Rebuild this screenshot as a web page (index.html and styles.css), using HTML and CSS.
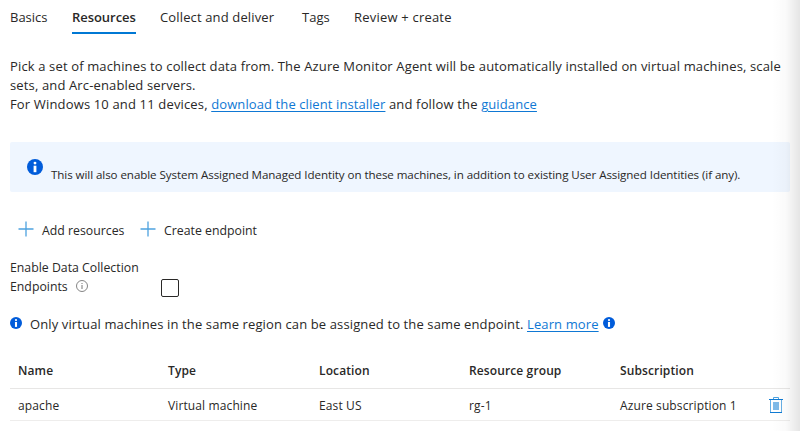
FILE: index.html
```
<!DOCTYPE html>
<html lang="en">
<head>
<meta charset="utf-8">
<title>Create Data Collection Rule</title>
<link rel="stylesheet" href="styles.css">
</head>
<body>
<svg class="defs" width="0" height="0" aria-hidden="true">
  <symbol id="info" viewBox="0 0 16 16"><circle cx="8" cy="8" r="8" fill="#015cda"/><circle cx="8" cy="4.1" r="1.45" fill="#fff"/><path d="M6.6 6.7h2.8v6.5H6.6z" fill="#fff"/></symbol>
  <symbol id="plus" viewBox="0 0 16 16"><path d="M8 .5v15M.5 8h15" stroke="#4da2df" stroke-width="1.3"/></symbol>
</svg>
<main class="page">
  <nav class="tabs">
    <a class="tab t-basics">Basics</a>
    <a class="tab active">Resources</a>
    <a class="tab t-collect">Collect and deliver</a>
    <a class="tab t-tags">Tags</a>
    <a class="tab t-review">Review + create</a>
  </nav>
  <p class="intro">Pick a set of machines to collect data from. The Azure Monitor Agent will be automatically installed on virtual machines, scale<br>sets, and Arc-enabled servers.<br><span class="line3">For Windows 10 and 11 devices, <a class="link">download the client installer</a> and follow the <a class="link">guidance</a></span></p>
  <div class="banner">
    <svg class="banner-icon"><use href="#info"/></svg>
    <span class="banner-text">This will also enable System Assigned Managed Identity on these machines, in addition to existing User Assigned Identities (if any).</span>
  </div>
  <div class="commands">
    <div class="command"><svg class="plus"><use href="#plus"/></svg><span>Add resources</span></div>
    <div class="command"><svg class="plus"><use href="#plus"/></svg><span>Create endpoint</span></div>
  </div>
  <div class="field">
    <div class="field-label">Enable Data Collection<br>Endpoints<svg class="hint" viewBox="0 0 12 12"><circle cx="6" cy="6" r="5.5" fill="none" stroke="#777" stroke-width=".9"/><path d="M6 5v4M6 3v1" stroke="#777"/></svg></div>
    <div class="checkbox"></div>
  </div>
  <div class="note"><svg class="small-info"><use href="#info"/></svg><span class="note-text">Only virtual machines in the same region can be assigned to the same endpoint. <a class="link">Learn more</a></span><svg class="small-info"><use href="#info"/></svg></div>
  <div class="table">
    <div class="row head"><span>Name</span><span>Type</span><span>Location</span><span>Resource group</span><span>Subscription</span></div>
    <div class="row"><span>apache</span><span>Virtual machine</span><span>East US</span><span>rg-1</span><span>Azure subscription 1</span>
      <svg class="trash" viewBox="0 0 14 16"><path d="M4.5 2V.5h5V2" fill="none" stroke="#4da2df"/><path d="M0 2h14v1H0z" fill="#0f7ad3"/><path d="M1.5 3v12M12.5 3v12" stroke="#67afe5"/><path d="M1 15h12v1H1z" fill="#0f7ad3"/><path d="M4 5h6v8H4z" fill="#7fbae8"/></svg>
    </div>
  </div>
</main>
<div class="edge"></div>
</body>
</html>
```

FILE: styles.css
```
* { box-sizing: border-box; }
body { margin: 0; width: 800px; height: 431px; overflow: hidden; background: #fff; color: #292827; font: 13px/19px "Open Sans", "Noto Sans", sans-serif; letter-spacing: .14px; white-space: nowrap; }
svg { display: block; flex: none; }
.defs { position: absolute; }
.page { display: flex; flex-direction: column; padding: 0 10px; }
.tabs { display: flex; height: 34px; padding-top: 8px; }
.tab { height: 26px; }
.t-basics { width: 62px; letter-spacing: 0; }
.active { width: 64px; font-weight: 600; letter-spacing: -.05px; border-bottom: 2px solid #0078d4; }
.t-collect { margin-left: 24px; width: 142px; }
.t-tags { width: 52px; letter-spacing: 0; }
.t-review { letter-spacing: .2px; }
.intro { margin: 23px 0 0; height: 57px; }
.line3 { letter-spacing: .155px; }
.line3 .link { letter-spacing: .1px; }
.link { color: #0f78d4; text-decoration: underline; text-underline-offset: 2px; }
.banner { display: flex; margin-top: 28px; height: 50px; padding: 17px 17px 0; background: #eff6ff; border-radius: 2px; }
.banner-icon { width: 16px; height: 16px; }
.banner-text { margin: -1px 0 0 8px; line-height: 34px; height: 34px; font-size: 11.6px; letter-spacing: -.08px; }
.commands { display: flex; margin-top: 28px; padding-left: 8px; height: 20px; font-size: 12.3px; letter-spacing: 0; line-height: 21px; }
.command { display: flex; width: 122px; }
.plus { width: 16px; height: 16px; margin: 1px 8px 0 0; }
.field { display: flex; margin-top: 18px; height: 40px; font-size: 12.3px; letter-spacing: 0; }
.field-label { width: 151px; }
.hint { display: inline-block; width: 12px; height: 12px; margin-left: 8px; vertical-align: -1px; }
.checkbox { width: 18px; height: 18px; margin-top: 21px; border: 1px solid #292827; border-radius: 2px; }
.note { display: flex; margin-top: 17px; height: 20px; letter-spacing: .12px; }
.small-info { width: 12px; height: 12px; margin-top: 2px; }
.note-text { margin: 0 4px 0 8px; }
.table { margin-top: 16px; width: 780px; }
.row { display: grid; grid-template-columns: 150px 151px 150px 151px 149px 14px; padding-left: 8px; height: 32px; border-bottom: 1px solid #eeedec; line-height: 34px; font-size: 12px; letter-spacing: .12px; }
.head { height: 38px; font-weight: 600; border-color: #e7e6e5; line-height: 40px; }
.trash { width: 14px; height: 16px; margin-top: 8px; }
.edge { position: absolute; top: 0; right: 0; width: 28px; height: 431px; background: linear-gradient(90deg, rgba(0,0,0,0), rgba(0,0,0,.02) 50%, rgba(0,0,0,.1)); pointer-events: none; }
```
